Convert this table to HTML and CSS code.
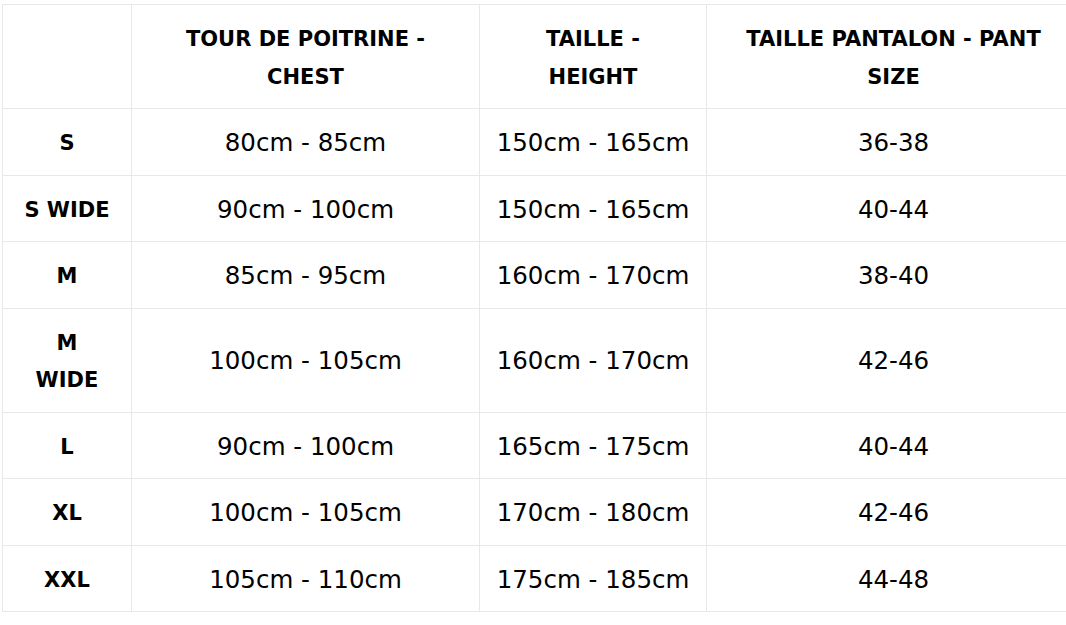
FILE: index.html
```html
<!DOCTYPE html>
<html lang="fr">
<head>
<meta charset="utf-8">
<title>Guide des tailles</title>
<link rel="stylesheet" href="styles.css">
</head>
<body>
<table class="size-table">
  <colgroup>
    <col class="c-size">
    <col class="c-chest">
    <col class="c-height">
    <col class="c-pant">
  </colgroup>
  <thead>
    <tr>
      <th></th>
      <th>TOUR DE POITRINE -<br>CHEST</th>
      <th>TAILLE -<br>HEIGHT</th>
      <th>TAILLE PANTALON - PANT<br>SIZE</th>
    </tr>
  </thead>
  <tbody>
    <tr><th>S</th><td>80cm - 85cm</td><td>150cm - 165cm</td><td>36-38</td></tr>
    <tr><th>S WIDE</th><td>90cm - 100cm</td><td>150cm - 165cm</td><td>40-44</td></tr>
    <tr><th>M</th><td>85cm - 95cm</td><td>160cm - 170cm</td><td>38-40</td></tr>
    <tr><th>M<br>WIDE</th><td>100cm - 105cm</td><td>160cm - 170cm</td><td>42-46</td></tr>
    <tr><th>L</th><td>90cm - 100cm</td><td>165cm - 175cm</td><td>40-44</td></tr>
    <tr><th>XL</th><td>100cm - 105cm</td><td>170cm - 180cm</td><td>42-46</td></tr>
    <tr><th>XXL</th><td>105cm - 110cm</td><td>175cm - 185cm</td><td>44-48</td></tr>
  </tbody>
</table>
</body>
</html>
```
FILE: styles.css
```css
html, body {
  margin: 0;
  padding: 0;
  background: #fff;
}
body {
  padding: 4px 0 0 2px;
  font-family: "DejaVu Sans", "Open Sans", sans-serif;
  color: #000;
  overflow: hidden;
}
.size-table {
  border-collapse: collapse;
  table-layout: fixed;
  width: 1078px;
}
.c-size { width: 129px; }
.c-chest { width: 348px; }
.c-height { width: 227px; }
.c-pant { width: 374px; }
.size-table th,
.size-table td {
  border: 1px solid #e8e8e8;
  padding: 14px 4px;
  text-align: center;
  vertical-align: middle;
  line-height: 37.5px;
}
.size-table td {
  font-size: 24.5px;
  font-weight: 400;
  padding-top: 15px;
  padding-bottom: 13px;
}
.size-table th {
  font-size: 21px;
  font-weight: 700;
  padding-top: 16px;
  padding-bottom: 12px;
}
```
